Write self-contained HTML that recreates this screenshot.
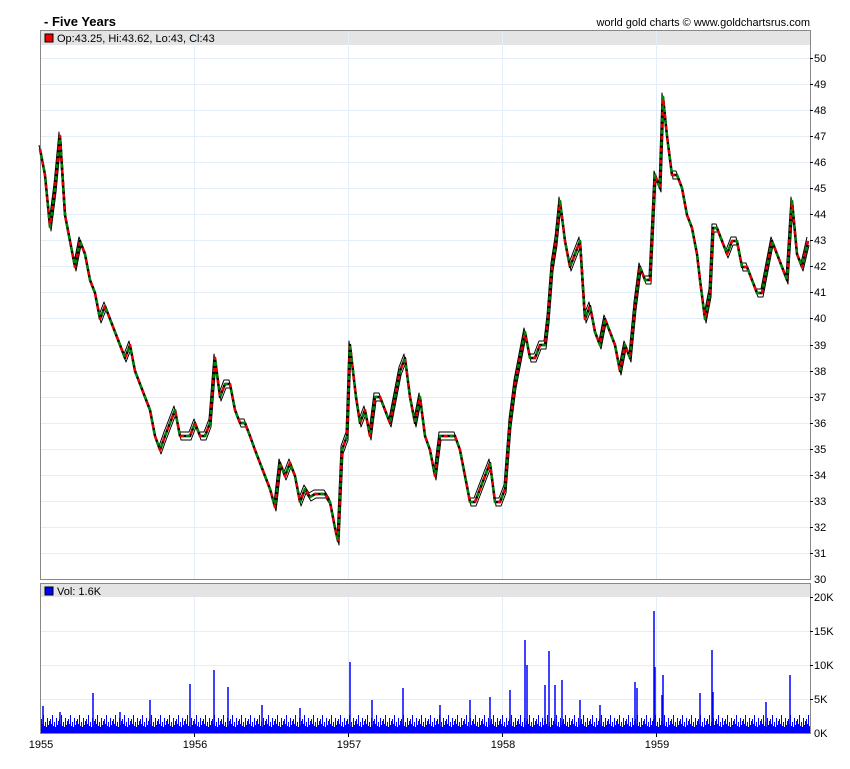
<!DOCTYPE html>
<html><head><meta charset="utf-8"><style>
html,body{margin:0;padding:0;background:#fff;}
svg{display:block;font-family:"Liberation Sans",sans-serif;}
</style></head><body>
<svg width="850" height="769" viewBox="0 0 850 769" xmlns="http://www.w3.org/2000/svg">
<defs>
<polyline id="p" points="40,149 45,175 50,227 55,188 60,136 65,215 70,241 75,267 80,241 85,254 90,280 95,293 100,319 105,306 110,319 115,332 120,345 125,358 130,345 135,371 140,384 145,397 150,410 155,436 160,450 165,436 170,423 175,410 180,436 185,436 190,436 195,423 200,436 205,436 210,423 215,358 220,397 225,384 230,384 235,410 240,423 245,423 250,436 255,450 260,463 265,476 270,489 275,507 280,463 285,476 290,463 295,476 300,502 305,489 310,497 315,494 320,494 325,494 330,502 335,528 338,541 342,450 347,436 350,345 353,371 356,397 360,423 365,410 370,436 375,397 380,397 385,410 390,423 395,397 400,371 405,358 410,397 415,423 420,397 425,436 430,450 435,476 440,436 445,436 450,436 455,436 460,450 465,476 470,502 475,502 480,489 485,476 490,463 495,502 500,502 505,489 510,423 515,384 520,358 525,332 530,358 535,358 540,345 545,345 548,319 552,267 556,241 560,201 565,241 570,267 575,254 580,241 585,319 590,306 595,332 600,345 605,319 610,332 615,345 620,371 625,345 630,358 635,306 640,267 645,280 650,280 655,175 660,188 663,97 667,136 672,175 677,175 682,188 687,215 692,228 697,254 700,280 705,319 710,293 713,228 717,228 722,241 727,254 732,241 737,241 742,267 747,267 752,280 757,293 762,293 767,267 772,241 777,254 782,267 787,280 792,201 797,254 802,267 808,241"/>
<pattern id="vp" x="41" y="693" width="9" height="40" patternUnits="userSpaceOnUse">
<rect x="0" y="26" width="1" height="14" fill="#00f"/><rect x="1" y="31" width="1" height="9" fill="#00f"/><rect x="2" y="22" width="1" height="18" fill="#00f"/><rect x="3" y="33" width="1" height="7" fill="#00f"/><rect x="4" y="29" width="1" height="11" fill="#00f"/><rect x="5" y="34" width="1" height="6" fill="#00f"/><rect x="6" y="25" width="1" height="15" fill="#00f"/><rect x="7" y="32" width="1" height="8" fill="#00f"/><rect x="8" y="28" width="1" height="12" fill="#00f"/>
</pattern>
</defs>
<text x="44" y="26" font-size="13" font-weight="bold" fill="#000">- Five Years</text>
<text x="810" y="26" font-size="11" text-anchor="end" fill="#000">world gold charts © www.goldchartsrus.com</text>
<rect x="40.5" y="30.5" width="770" height="549" fill="#fff" stroke="#888"/>
<rect x="41" y="31" width="769" height="14" fill="#e4e4e4"/>
<g stroke="#e3eef8" stroke-width="1">
<line x1="41" x2="810" y1="58.5" y2="58.5"/><line x1="41" x2="810" y1="84.5" y2="84.5"/><line x1="41" x2="810" y1="110.5" y2="110.5"/><line x1="41" x2="810" y1="136.5" y2="136.5"/><line x1="41" x2="810" y1="162.5" y2="162.5"/><line x1="41" x2="810" y1="188.5" y2="188.5"/><line x1="41" x2="810" y1="214.5" y2="214.5"/><line x1="41" x2="810" y1="240.5" y2="240.5"/><line x1="41" x2="810" y1="266.5" y2="266.5"/><line x1="41" x2="810" y1="292.5" y2="292.5"/><line x1="41" x2="810" y1="318.5" y2="318.5"/><line x1="41" x2="810" y1="345.5" y2="345.5"/><line x1="41" x2="810" y1="371.5" y2="371.5"/><line x1="41" x2="810" y1="397.5" y2="397.5"/><line x1="41" x2="810" y1="423.5" y2="423.5"/><line x1="41" x2="810" y1="449.5" y2="449.5"/><line x1="41" x2="810" y1="475.5" y2="475.5"/><line x1="41" x2="810" y1="501.5" y2="501.5"/><line x1="41" x2="810" y1="527.5" y2="527.5"/><line x1="41" x2="810" y1="553.5" y2="553.5"/>
<line x1="194.5" x2="194.5" y1="31" y2="579"/><line x1="348.5" x2="348.5" y1="31" y2="579"/><line x1="502.5" x2="502.5" y1="31" y2="579"/><line x1="656.5" x2="656.5" y1="31" y2="579"/>
</g>
<rect x="45" y="34" width="8" height="8" fill="#e00" stroke="#000" stroke-width="1"/>
<text x="57" y="42" font-size="11" fill="#000">Op:43.25, Hi:43.62, Lo:43, Cl:43</text>
<g font-size="11" fill="#000">
<text x="814" y="62">50</text><text x="814" y="88">49</text><text x="814" y="114">48</text><text x="814" y="140">47</text><text x="814" y="166">46</text><text x="814" y="192">45</text><text x="814" y="218">44</text><text x="814" y="244">43</text><text x="814" y="270">42</text><text x="814" y="296">41</text><text x="814" y="322">40</text><text x="814" y="349">39</text><text x="814" y="375">38</text><text x="814" y="401">37</text><text x="814" y="427">36</text><text x="814" y="453">35</text><text x="814" y="479">34</text><text x="814" y="505">33</text><text x="814" y="531">32</text><text x="814" y="557">31</text><text x="814" y="583">30</text>
</g>
<g fill="none" stroke-linejoin="round">
<use href="#p" transform="translate(1,4)" stroke="#000" stroke-width="1"/>
<use href="#p" transform="translate(-1,-4)" stroke="#000" stroke-width="1"/>
<use href="#p" stroke="#000" stroke-width="2.5"/>
<use href="#p" stroke="#e00" stroke-width="2.5" stroke-dasharray="4 8"/>
<use href="#p" stroke="#080" stroke-width="2.5" stroke-dasharray="4 8" stroke-dashoffset="6"/>
</g>
<rect x="40.5" y="583.5" width="770" height="150" fill="#fff" stroke="#888"/>
<rect x="41" y="584" width="769" height="13" fill="#e4e4e4"/>
<g stroke="#e3eef8">
<line x1="41" x2="810" y1="631.5" y2="631.5"/><line x1="41" x2="810" y1="665.5" y2="665.5"/><line x1="41" x2="810" y1="699.5" y2="699.5"/>
<line x1="194.5" x2="194.5" y1="597" y2="733"/><line x1="348.5" x2="348.5" y1="597" y2="733"/><line x1="502.5" x2="502.5" y1="597" y2="733"/><line x1="656.5" x2="656.5" y1="597" y2="733"/>
</g>
<rect x="45" y="587" width="8" height="8" fill="#00f" stroke="#000"/>
<text x="57" y="595" font-size="11" fill="#000">Vol: 1.6K</text>
<rect x="41" y="693" width="769" height="40" fill="url(#vp)"/>
<rect x="41" y="727" width="769" height="6" fill="#00f"/>
<g stroke="#00f" stroke-width="1.5">
<line x1="43" x2="43" y1="733" y2="706"/><line x1="60" x2="60" y1="733" y2="712"/><line x1="93" x2="93" y1="733" y2="693"/><line x1="120" x2="120" y1="733" y2="712"/><line x1="150" x2="150" y1="733" y2="700"/><line x1="190" x2="190" y1="733" y2="684"/><line x1="214" x2="214" y1="733" y2="670"/><line x1="228" x2="228" y1="733" y2="687"/><line x1="262" x2="262" y1="733" y2="705"/><line x1="300" x2="300" y1="733" y2="708"/><line x1="350" x2="350" y1="733" y2="662"/><line x1="372" x2="372" y1="733" y2="700"/><line x1="403" x2="403" y1="733" y2="688"/><line x1="440" x2="440" y1="733" y2="705"/><line x1="470" x2="470" y1="733" y2="700"/><line x1="490" x2="490" y1="733" y2="697"/><line x1="510" x2="510" y1="733" y2="690"/><line x1="525" x2="525" y1="733" y2="640"/><line x1="527" x2="527" y1="733" y2="665"/><line x1="545" x2="545" y1="733" y2="685"/><line x1="549" x2="549" y1="733" y2="651"/><line x1="555" x2="555" y1="733" y2="685"/><line x1="562" x2="562" y1="733" y2="680"/><line x1="580" x2="580" y1="733" y2="700"/><line x1="600" x2="600" y1="733" y2="705"/><line x1="635" x2="635" y1="733" y2="682"/><line x1="637" x2="637" y1="733" y2="688"/><line x1="654" x2="654" y1="733" y2="611"/><line x1="655" x2="655" y1="733" y2="667"/><line x1="662" x2="662" y1="733" y2="695"/><line x1="663" x2="663" y1="733" y2="675"/><line x1="700" x2="700" y1="733" y2="693"/><line x1="712" x2="712" y1="733" y2="650"/><line x1="713" x2="713" y1="733" y2="692"/><line x1="766" x2="766" y1="733" y2="702"/><line x1="790" x2="790" y1="733" y2="675"/>
</g>
<g font-size="11" fill="#000">
<text x="814" y="601">20K</text><text x="814" y="635">15K</text><text x="814" y="669">10K</text><text x="814" y="703">5K</text><text x="814" y="737">0K</text>
<text x="41" y="748" text-anchor="middle">1955</text><text x="195" y="748" text-anchor="middle">1956</text><text x="349" y="748" text-anchor="middle">1957</text><text x="503" y="748" text-anchor="middle">1958</text><text x="657" y="748" text-anchor="middle">1959</text>
</g>
<g stroke="#000">
<line x1="810" x2="813" y1="58.5" y2="58.5"/><line x1="810" x2="813" y1="84.5" y2="84.5"/><line x1="810" x2="813" y1="110.5" y2="110.5"/><line x1="810" x2="813" y1="136.5" y2="136.5"/><line x1="810" x2="813" y1="162.5" y2="162.5"/><line x1="810" x2="813" y1="188.5" y2="188.5"/><line x1="810" x2="813" y1="214.5" y2="214.5"/><line x1="810" x2="813" y1="240.5" y2="240.5"/><line x1="810" x2="813" y1="266.5" y2="266.5"/><line x1="810" x2="813" y1="292.5" y2="292.5"/><line x1="810" x2="813" y1="318.5" y2="318.5"/><line x1="810" x2="813" y1="345.5" y2="345.5"/><line x1="810" x2="813" y1="371.5" y2="371.5"/><line x1="810" x2="813" y1="397.5" y2="397.5"/><line x1="810" x2="813" y1="423.5" y2="423.5"/><line x1="810" x2="813" y1="449.5" y2="449.5"/><line x1="810" x2="813" y1="475.5" y2="475.5"/><line x1="810" x2="813" y1="501.5" y2="501.5"/><line x1="810" x2="813" y1="527.5" y2="527.5"/><line x1="810" x2="813" y1="553.5" y2="553.5"/>
<line x1="810" x2="813" y1="597.5" y2="597.5"/><line x1="810" x2="813" y1="631.5" y2="631.5"/><line x1="810" x2="813" y1="665.5" y2="665.5"/><line x1="810" x2="813" y1="699.5" y2="699.5"/>
<line x1="194.5" x2="194.5" y1="733" y2="737"/><line x1="348.5" x2="348.5" y1="733" y2="737"/><line x1="502.5" x2="502.5" y1="733" y2="737"/><line x1="656.5" x2="656.5" y1="733" y2="737"/>
</g>
</svg>
</body></html>
